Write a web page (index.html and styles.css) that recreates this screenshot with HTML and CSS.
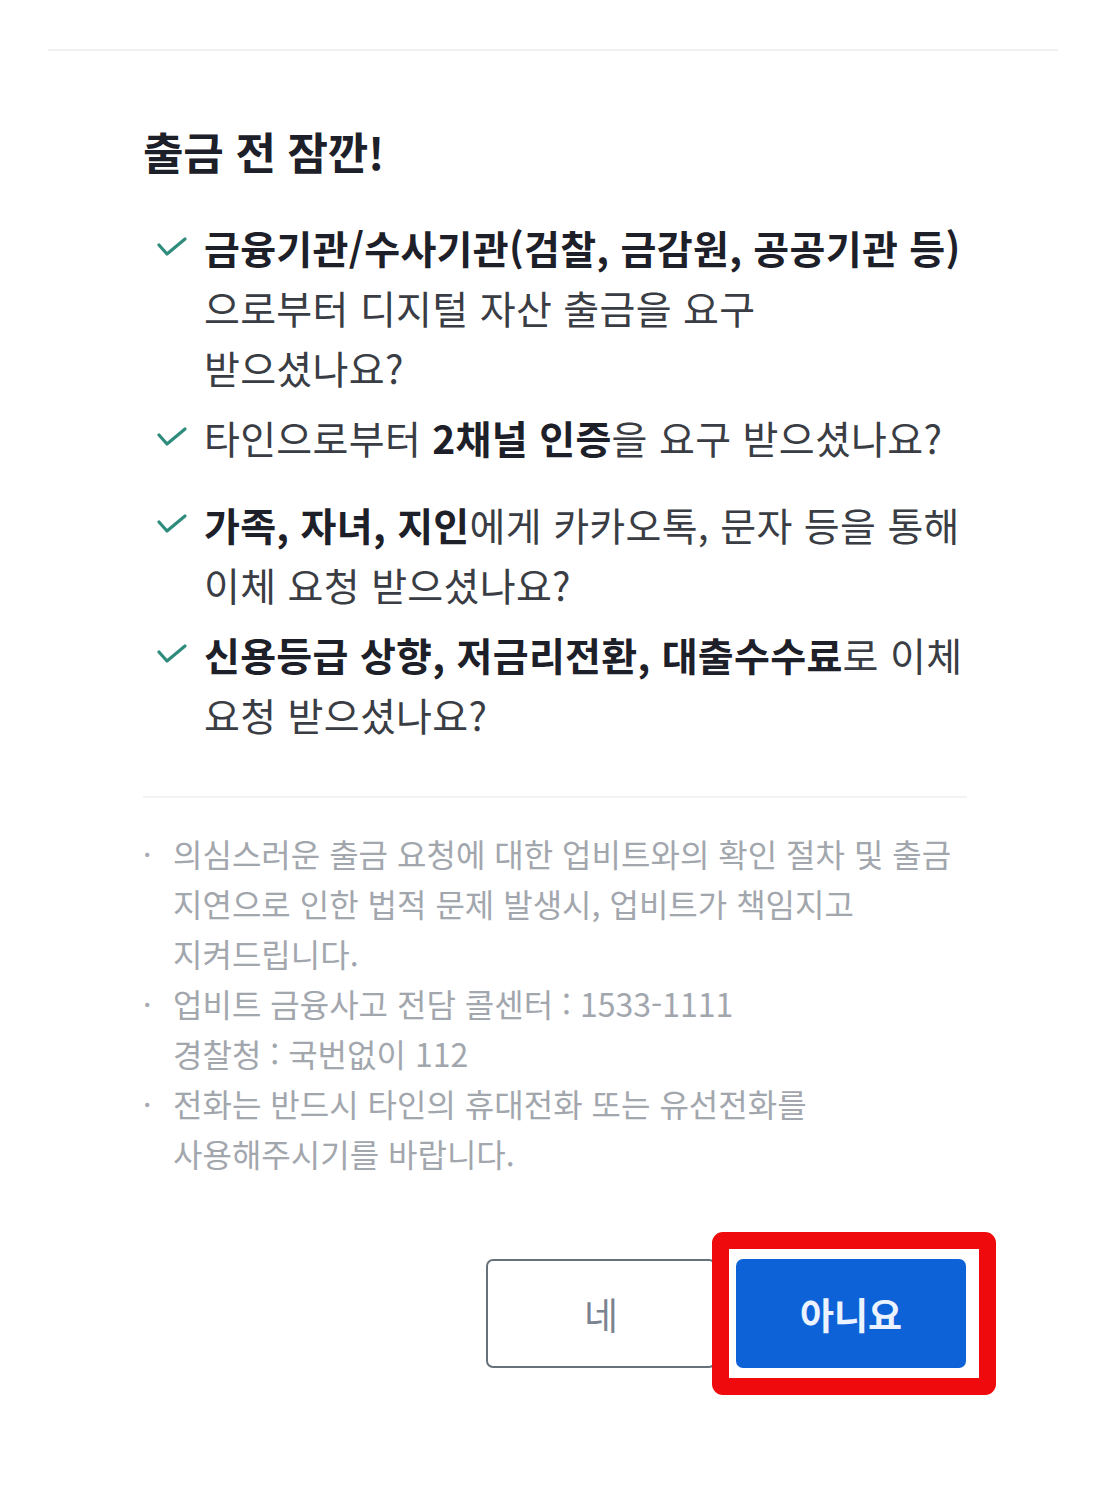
FILE: index.html
```html
<!DOCTYPE html>
<html lang="ko">
<head>
    <meta charset="UTF-8">
    <meta name="viewport" content="width=device-width, initial-scale=1.0">
    <title>출금 전 잠깐!</title>
    <link rel="stylesheet" href="styles.css">
</head>
<body>

    <div class="top-line"></div>

    <div class="dialog">
        <h2 class="dialog-title">출금 전 잠깐!</h2>

        <ul class="check-list">
            <li>
                <svg class="check" viewBox="0 0 30 20" width="30" height="20"><polyline points="2,8 10,17 28,2" /></svg>
                <p><b>금융기관/수사기관(검찰, 금감원, 공공기관 등)</b><br>으로부터 디지털 자산 출금을 요구<br>받으셨나요?</p>
            </li>
            <li class="spaced">
                <svg class="check" viewBox="0 0 30 20" width="30" height="20"><polyline points="2,8 10,17 28,2" /></svg>
                <p>타인으로부터 <b>2채널 인증</b>을 요구 받으셨나요?</p>
            </li>
            <li>
                <svg class="check" viewBox="0 0 30 20" width="30" height="20"><polyline points="2,8 10,17 28,2" /></svg>
                <p><b>가족, 자녀, 지인</b>에게 카카오톡, 문자 등을 통해<br>이체 요청 받으셨나요?</p>
            </li>
            <li>
                <svg class="check" viewBox="0 0 30 20" width="30" height="20"><polyline points="2,8 10,17 28,2" /></svg>
                <p><b>신용등급 상향, 저금리전환, 대출수수료</b>로 이체<br>요청 받으셨나요?</p>
            </li>
        </ul>

        <ul class="notes">
            <li><span class="dot">·</span><p>의심스러운 출금 요청에 대한 업비트와의 확인 절차 및 출금<br>지연으로 인한 법적 문제 발생시, 업비트가 책임지고<br>지켜드립니다.</p></li>
            <li><span class="dot">·</span><p>업비트 금융사고 전담 콜센터 : 1533-1111<br>경찰청 : 국번없이 112</p></li>
            <li><span class="dot">·</span><p>전화는 반드시 타인의 휴대전화 또는 유선전화를<br>사용해주시기를 바랍니다.</p></li>
        </ul>

        <div class="buttons">
            <button class="btn btn-yes">네</button>
            <div class="marked">
                <button class="btn btn-no">아니요</button>
                <span class="mark-box"></span>
            </div>
        </div>
    </div>

</body>
</html>
```

FILE: styles.css
```css
body {
    margin: 0;
    background: #fff;
    font-family: "Noto Sans CJK KR", "Noto Sans", sans-serif;
    color: #34373e;
}

.top-line {
    height: 2px;
    margin: 49px 48px 0;
    background: #f1f1f1;
}

.dialog {
    width: 824px;
    margin: 0 0 0 143px;
    padding-bottom: 120px;
}

.dialog-title {
    margin: 75px 0 0;
    font-size: 44px;
    line-height: 50px;
    font-weight: 700;
    color: #1d2028;
    letter-spacing: -0.3px;
}

.check-list {
    list-style: none;
    margin: 41px 0 0;
    padding: 0;
}

.check-list li {
    display: flex;
    align-items: flex-start;
    padding-left: 14px;
}

.check-list li + li {
    margin-top: 10px;
}

.check-list li.spaced {
    margin-bottom: 27px; /* more room below the one-line item */
}

.check {
    flex: none;
    margin: 20px 17px 0 0;
    fill: none;
    stroke: #2f8c7d;
    stroke-width: 3.2;
    stroke-linecap: round;
    stroke-linejoin: round;
}

.check-list p {
    margin: 0;
    font-size: 39px;
    line-height: 60px;
    letter-spacing: 0.3px;
    white-space: nowrap;
    color: #3a3d44;
}

.check-list b {
    font-weight: 700;
    color: #1d2028;
}

.notes {
    list-style: none;
    margin: 52px 0 0;
    padding: 30px 0 0;
    border-top: 2px solid #f3f3f3;
}

.notes li {
    display: flex;
}

.notes .dot {
    width: 30px;
    flex: none;
    font-size: 30px;
    line-height: 50px;
    color: #a6aab0;
}

.notes p {
    margin: 0;
    font-size: 32px;
    line-height: 50px;
    white-space: nowrap;
    color: #a2a6ad;
}

.buttons {
    display: flex;
    justify-content: flex-end;
    gap: 20px;
    margin-top: 81px;
    padding-right: 1px;
}

.btn {
    width: 230px;
    height: 109px;
    border-radius: 7px;
    font-family: inherit;
    font-size: 37px;
    cursor: pointer;
}

.btn-yes {
    background: #fff;
    border: 2px solid #66727a;
    color: #7b8390;
}

.btn-no {
    display: block;
    background: #0d62d8;
    border: none;
    color: #eaf3ff;
    font-weight: 700;
}

.marked {
    position: relative;
}

/* red outline drawn over the chosen button */
.mark-box {
    position: absolute;
    left: -24px;
    top: -27px;
    right: -30px;
    bottom: -27px;
    border: 17px solid #ee0a0d;
    border-radius: 11px;
}
```
